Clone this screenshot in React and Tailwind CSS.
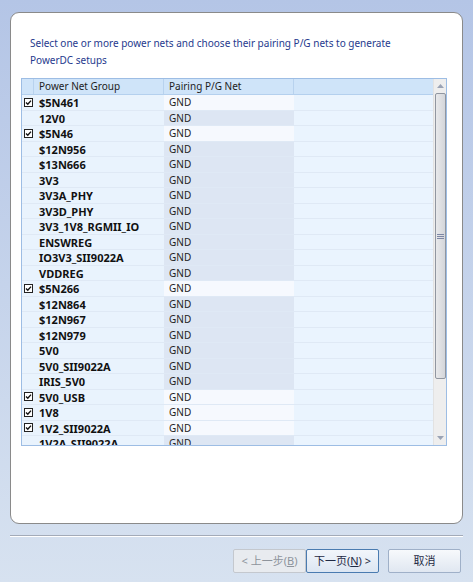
import React from "react";

const rows = [
  { name: "$5N461", on: true },
  { name: "12V0" },
  { name: "$5N46", on: true },
  { name: "$12N956" },
  { name: "$13N666" },
  { name: "3V3" },
  { name: "3V3A_PHY" },
  { name: "3V3D_PHY" },
  { name: "3V3_1V8_RGMII_IO" },
  { name: "ENSWREG" },
  { name: "IO3V3_SII9022A" },
  { name: "VDDREG" },
  { name: "$5N266", on: true },
  { name: "$12N864" },
  { name: "$12N967" },
  { name: "$12N979" },
  { name: "5V0" },
  { name: "5V0_SII9022A" },
  { name: "IRIS_5V0" },
  { name: "5V0_USB", on: true },
  { name: "1V8", on: true },
  { name: "1V2_SII9022A", on: true },
  { name: "1V2A_SII9022A" },
];

function Check() {
  return (
    <svg width="9" height="9" viewBox="0 0 9 9">
      <rect x="0.5" y="0.5" width="8" height="8" fill="white" stroke="#222" />
      <path d="M2 4.5 L3.8 6.3 L7 2.6" fill="none" stroke="#111" strokeWidth="1.4" />
    </svg>
  );
}

function Row({ name, on }) {
  return (
    <div className="flex h-[15.5px] shrink-0 border-b border-[#dfe9f5]">
      <div className="w-[12px] flex items-center justify-end pr-[1px] bg-[#e9f3fd]">
        {on ? <Check /> : null}
      </div>
      <div className="w-[130px] pl-[5px] bg-[#e9f3fd] font-bold text-[11px] text-[#111] leading-[15px]">
        {name}
      </div>
      <div
        className={
          "w-[130px] pl-[5px] leading-[15px] text-[#222] " +
          (on ? "bg-[#f6f9fe]" : "bg-[#dde6f3]")
        }
      >
        GND
      </div>
      <div className="flex-1 bg-[#eaf4fe]" />
    </div>
  );
}

export default function App() {
  return (
    <div
      className="w-[473px] h-[582px] overflow-hidden bg-gradient-to-b from-[#b4c5e6] to-[#d7e2f0] pt-[12px] px-[10px] text-[10px]"
      style={{ fontFamily: '"Noto Sans", "Noto Sans CJK SC", sans-serif' }}
    >
      <div className="h-[512px] rounded-[9px] border border-[#8a8a8a] bg-white pt-[22px]">
        <p className="px-[19px] text-[#263a8e] leading-[17px]">
          Select one or more power nets and choose their pairing P/G nets to generate
          <br />
          PowerDC setups
        </p>
        <div className="mx-[10px] mt-[9px] w-[426px] h-[368px] border border-[#9dbde4] flex overflow-hidden">
          <div className="flex-1 flex flex-col overflow-hidden">
            <div className="flex h-[16px] shrink-0 bg-[#cfe4f9] border-b border-[#b4d0ee] text-[#1d1d1d] leading-[15px]">
              <div className="w-[12px] border-r border-[#b8d2ee]" />
              <div className="w-[130px] pl-[5px] border-r border-[#b8d2ee]">Power Net Group</div>
              <div className="w-[130px] pl-[5px] border-r border-[#b8d2ee]">Pairing P/G Net</div>
              <div className="flex-1" />
            </div>
            {rows.map((r) => (
              <Row key={r.name} {...r} />
            ))}
          </div>
          <div className="w-[13px] shrink-0 bg-[#eeeeee] border-l border-[#e2e2e2] flex flex-col items-center">
            <div className="h-[14px] shrink-0 flex items-center justify-center">
              <svg width="7" height="4" viewBox="0 0 7 4">
                <path d="M0 4 L3.5 0 L7 4 Z" fill="#9aa3b5" />
              </svg>
            </div>
            <div className="w-[11px] h-[286px] shrink-0 rounded-[2px] border border-[#9096a0] bg-gradient-to-r from-[#e8e9eb] to-[#d4d6da] flex items-center justify-center">
              <svg width="7" height="5" viewBox="0 0 7 5">
                <path d="M0 0.5 H7 M0 2.5 H7 M0 4.5 H7" stroke="#7d86a4" strokeWidth="1" />
              </svg>
            </div>
            <div className="flex-1" />
            <div className="h-[14px] shrink-0 flex items-center justify-center">
              <svg width="7" height="4" viewBox="0 0 7 4">
                <path d="M0 0 L3.5 4 L7 0 Z" fill="#9aa3b5" />
              </svg>
            </div>
          </div>
        </div>
      </div>
      <div className="mt-[11px] border-t border-[#a3abb8] border-b border-b-white" />
      <div className="flex justify-end mt-[12px] mr-[2px] text-[11px]">
        <button className="w-[73px] h-[24px] border border-[#c4c8ce] bg-[#e8ebef] text-[#8e949c] rounded-[2px]">
          &lt; 上一步(<span className="underline">B</span>)
        </button>
        <button className="w-[73px] h-[24px] border border-[#4a7bb0] bg-gradient-to-b from-[#f2f6fb] to-[#dce6f2] text-[#1f2a44] rounded-[2px]">
          下一页(<span className="underline">N</span>) &gt;
        </button>
        <button className="ml-[9px] w-[73px] h-[24px] border border-[#9fb0c8] bg-gradient-to-b from-[#f7f9fc] to-[#e0e7f1] text-[#1f2a44] rounded-[2px]">
          取消
        </button>
      </div>
    </div>
  );
}
